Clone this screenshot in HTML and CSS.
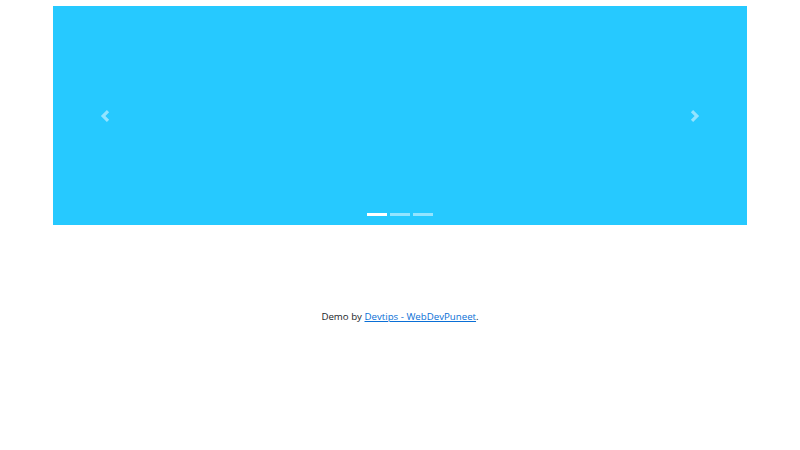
FILE: index.html
```html
<!DOCTYPE html>
<html>
<head>
<meta charset="utf-8">
<link rel="stylesheet" href="styles.css">
</head>
<body>
<div class="page">
  <div class="carousel">
    <div class="control prev">
      <svg class="chev" viewBox="0 0 8 8" width="12" height="12"><path d="M5.25 0l-4 4 4 4 1.5-1.5-2.5-2.5 2.5-2.5-1.5-1.5z" fill="#fff"/></svg>
    </div>
    <div class="spacer"></div>
    <div class="control next">
      <svg class="chev" viewBox="0 0 8 8" width="12" height="12"><path d="M2.75 0l-1.5 1.5 2.5 2.5-2.5 2.5 1.5 1.5 4-4-4-4z" fill="#fff"/></svg>
    </div>
    <ol class="indicators">
      <li class="active"></li>
      <li></li>
      <li></li>
    </ol>
  </div>
  <p class="credit">Demo by <a href="#">Devtips - WebDevPuneet</a>.</p>
</div>
</body>
</html>
```

FILE: styles.css
```css
html, body {
  margin: 0;
  padding: 0;
  background: #fff;
}
body {
  font-family: "Open Sans", "Noto Sans", sans-serif;
  color: #212529;
}
.page {
  padding: 6px 53px 0;
}
.carousel {
  position: relative;
  height: 219px;
  background: #26c9ff;
  display: flex;
}
.control {
  width: 15%;
  display: flex;
  align-items: center;
  justify-content: center;
  opacity: 0.5;
}
.spacer {
  flex: 1;
}
.chev {
  display: block;
}
.indicators {
  position: absolute;
  left: 0;
  right: 0;
  bottom: 9px;
  margin: 0;
  padding: 0;
  list-style: none;
  display: flex;
  justify-content: center;
  gap: 3px;
}
.indicators li {
  width: 20px;
  height: 3px;
  background: rgba(255, 255, 255, 0.5);
}
.indicators li.active {
  background: #fff;
}
.credit {
  margin: 84px 0 0;
  text-align: center;
  font-size: 9.7px;
  line-height: 16px;
}
.credit a {
  color: #0a6fd6;
  text-decoration: underline;
}
```
